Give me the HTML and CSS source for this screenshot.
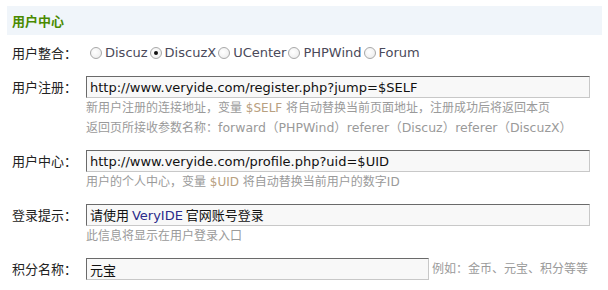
FILE: index.html
```html
<!DOCTYPE html>
<html>
<head>
<meta charset="utf-8">
<link rel="stylesheet" href="styles.css">
</head>
<body>
<div class="panel">
  <div class="panel-head">用户中心</div>
  <div class="row first">
    <div class="label">用户整合：</div>
    <div class="field radios">
      <label class="opt"><input type="radio" name="sys"> Discuz</label>
      <label class="opt"><input type="radio" name="sys" checked> DiscuzX</label>
      <label class="opt"><input type="radio" name="sys"> UCenter</label>
      <label class="opt"><input type="radio" name="sys"> PHPWind</label>
      <label class="opt"><input type="radio" name="sys"> Forum</label>
    </div>
  </div>
  <div class="row">
    <div class="label">用户注册：</div>
    <div class="field">
      <input class="text" type="text" value="http://www.veryide.com/register.php?jump=$SELF">
      <div class="help">新用户注册的连接地址，变量 <span class="var">$SELF</span> 将自动替换当前页面地址，注册成功后将返回本页</div>
      <div class="help">返回页所接收参数名称：<span class="lat">forward（PHPWind）referer（Discuz）referer（DiscuzX）</span></div>
    </div>
  </div>
  <div class="row">
    <div class="label">用户中心：</div>
    <div class="field">
      <input class="text" type="text" value="http://www.veryide.com/profile.php?uid=$UID">
      <div class="help">用户的个人中心，变量 <span class="var">$UID</span> 将自动替换当前用户的数字ID</div>
    </div>
  </div>
  <div class="row">
    <div class="label">登录提示：</div>
    <div class="field">
      <div class="text fake">请使用 <span class="brand">VeryIDE</span> 官网账号登录</div>
      <div class="help">此信息将显示在用户登录入口</div>
    </div>
  </div>
  <div class="row">
    <div class="label">积分名称：</div>
    <div class="field inline">
      <input class="text short" type="text" value="元宝">
      <span class="help side">例如：金币、元宝、积分等等</span>
    </div>
  </div>
</div>
</body>
</html>
```
FILE: styles.css
```css
html, body {
  margin: 0;
  padding: 0;
  background: #ffffff;
}
body {
  font-family: "DejaVu Sans", "Noto Sans CJK SC", sans-serif;
  font-size: 12px;
  color: #333;
}
.panel {
  padding: 6px 6px 0 7px;
}
.panel-head {
  height: 29px;
  line-height: 29px;
  background: #f0f5fa;
  color: #4a8a00;
  font-weight: bold;
  font-size: 13px;
  padding-left: 5px;
  font-family: "Noto Sans CJK SC", sans-serif;
}
.row {
  display: flex;
  padding: 6px 0 6px 5px;
}
.row.first {
  padding-top: 7px;
}
.label {
  width: 74px;
  flex: none;
  line-height: 22px;
  font-size: 13px;
  font-family: "Noto Sans CJK SC", sans-serif;
  color: #222;
}
.field {
  display: flex;
  flex-direction: column;
}
.field.inline {
  flex-direction: row;
  align-items: center;
}
.radios {
  flex-direction: row;
  align-items: center;
  line-height: 22px;
  padding-left: 4px;
}
.opt {
  display: inline-flex;
  align-items: center;
  color: #4a4a5a;
  font-size: 13px;
  margin-right: 2px;
}
.opt input {
  appearance: none;
  -webkit-appearance: none;
  width: 12px;
  height: 12px;
  margin: 0 3px 0 0;
  border: 1px solid #a8a8a8;
  border-radius: 50%;
  background: radial-gradient(circle at 40% 40%, #fff 0, #f2f2f2 60%, #e4e4e4 100%);
  position: relative;
}
.opt input:checked::after {
  content: "";
  position: absolute;
  left: 3px;
  top: 3px;
  width: 4px;
  height: 4px;
  border-radius: 50%;
  background: #111;
}
.text {
  box-sizing: border-box;
  width: 504px;
  height: 22px;
  margin: 0;
  padding: 0 3px;
  border: 1px solid #c8c8c8;
  border-top-color: #6a6a6a;
  border-left-color: #6a6a6a;
  background: #f8f8f8;
  font-family: "DejaVu Sans", "Noto Sans CJK SC", sans-serif;
  font-size: 13px;
  color: #111;
  line-height: 20px;
  outline: none;
}
.text.fake {
  font-family: "Noto Sans CJK SC", sans-serif;
  font-size: 13px;
}
.brand {
  font-family: "DejaVu Sans", sans-serif;
  font-size: 13px;
  color: #2a2a8a;
}
.text.short {
  width: 343px;
}
.help {
  line-height: 20px;
  color: #9a9a9a;
  font-size: 12px;
  font-family: "DejaVu Sans", "Noto Sans CJK SC", sans-serif;
}
.lat {
  font-size: 12.5px;
}
.var {
  color: #b8a080;
}
.help.side {
  margin-left: 3px;
}
```
